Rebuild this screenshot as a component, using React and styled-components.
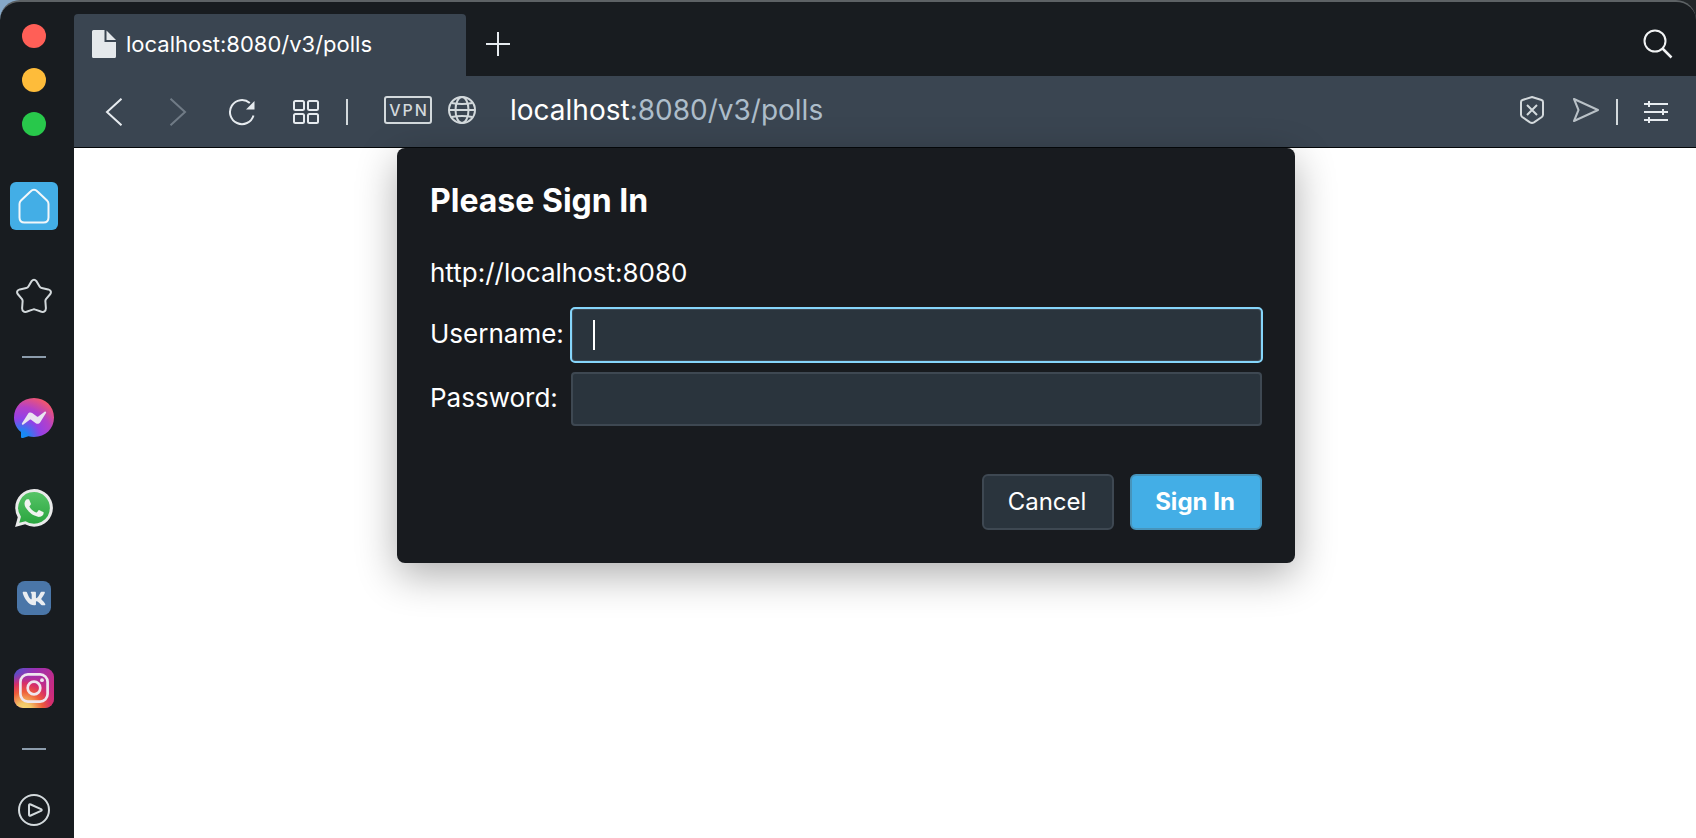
import React from "react";
import styled, { createGlobalStyle } from "styled-components";

const color = {
  frame: "#181c20",
  bar: "#3a4551",
  field: "#2a343d",
  line: "#3e4852",
  accent: "#43aee6",
  focus: "#86d6fb",
  icon: "#e6ebef",
  iconSoft: "#d3d9dc",
};

const GlobalStyle = createGlobalStyle`
  *, *::before, *::after { box-sizing: border-box; }
  body {
    margin: 0;
    background: linear-gradient(90deg, #86a9c9 0 50%, #23272a 50%);
    color: #fff;
    font-family: Inter, "Liberation Sans", sans-serif;
  }
  button, input { font: inherit; color: inherit; }
  h1, p { margin: 0; }
`;

const Browser = styled.div`
  display: flex;
  height: 100vh;
  overflow: hidden;
  background: ${color.frame};
  border-top: 2px solid #5d6265;
  border-radius: 20px 20px 0 0;
`;

const Sidebar = styled.aside`
  flex: none;
  width: 74px;
  display: flex;
  flex-direction: column;
  align-items: center;
  padding-top: 22px;
  overflow: hidden;
`;

const WindowControls = styled.div`
  flex: none;
  display: flex;
  flex-direction: column;
  gap: 20px;
  margin: 0 6px 25px 0;
`;

const PlainButton = styled.button`
  flex: none;
  display: flex;
  align-items: center;
  justify-content: center;
  padding: 0;
  border: 0;
  background: none;
`;

const Light = styled(PlainButton)`
  width: 24px;
  height: 24px;
  border-radius: 50%;
  background: ${(p) => p.$color};
`;

const Apps = styled.nav`
  display: flex;
  flex-direction: column;
  align-items: center;
  margin-right: 6px;
`;

const AppSlot = styled.div`
  flex: none;
  height: 90px;
  display: flex;
  align-items: center;
`;

const AppButton = styled(PlainButton)`
  width: 48px;
  height: 48px;
  border-radius: 6px;
  background: ${(p) => (p.$active ? color.accent : "none")};
`;

const Divider = styled.hr`
  flex: none;
  width: 24px;
  height: 2px;
  margin: 15px 0;
  border: 0;
  background: #8c9cac;
`;

const Main = styled.div`
  flex: 1;
  min-width: 0;
  display: flex;
  flex-direction: column;
`;

const TabStrip = styled.header`
  flex: none;
  height: 74px;
  display: flex;
  align-items: stretch;
  padding-top: 12px;
  padding-right: 22px;
`;

const Tab = styled.div`
  width: 392px;
  display: flex;
  align-items: center;
  gap: 10px;
  padding: 0 18px 2px;
  border-radius: 4px 4px 0 0;
  background: ${color.bar};
  font-size: 22px;
  line-height: 28px;
  white-space: nowrap;
`;

const StripButton = styled(PlainButton)`
  width: 32px;
  height: 60px;
  margin-left: ${(p) => (p.$end ? "auto" : "16px")};
`;

const Toolbar = styled.div`
  flex: none;
  height: 72px;
  display: flex;
  align-items: center;
  padding: 0 24px;
  background: ${color.bar};
  border-bottom: 1px solid #05080a;
`;

const ToolButton = styled(PlainButton)`
  width: 32px;
  height: 32px;
`;

const NavTools = styled.div`
  flex: none;
  display: flex;
  align-items: center;
  gap: 32px;
  margin-right: 24px;
`;

const Separator = styled.span`
  flex: none;
  width: 2px;
  height: 26px;
  background: ${color.iconSoft};
`;

const Location = styled.div`
  flex: 1;
  min-width: 0;
  display: flex;
  align-items: center;
  gap: 14px;
  margin-left: 36px;
  padding-bottom: 3px;
`;

const VpnBadge = styled(PlainButton)`
  width: 48px;
  height: 28px;
  padding-left: 2px;
  border: 2px solid ${color.iconSoft};
  border-radius: 3px;
  color: ${color.iconSoft};
  font-size: 16px;
  font-weight: 500;
  letter-spacing: 2px;
`;

const Address = styled.button`
  flex: 1;
  min-width: 0;
  margin-left: 18px;
  padding: 0;
  border: 0;
  background: none;
  color: #adbdca;
  font-size: 28px;
  line-height: 36px;
  text-align: left;
  white-space: nowrap;
`;

const Host = styled.span`
  color: #fff;
`;

const PageTools = styled.div`
  flex: none;
  display: flex;
  align-items: center;
`;

const ShareTools = styled.div`
  display: flex;
  gap: 22px;
  margin-right: 14px;
  padding-bottom: 3px;
`;

const SetupButton = styled(ToolButton)`
  margin-left: 22px;
`;

const Page = styled.main`
  flex: 1;
  display: flex;
  align-items: flex-start;
  justify-content: center;
  padding-right: 78px;
  background: #fff;
`;

const Dialog = styled.section`
  width: 898px;
  max-width: 100%;
  padding: 33px;
  border-radius: 8px;
  background: #181b1f;
  box-shadow: 0 12px 40px rgba(0, 0, 0, 0.32);
`;

const Title = styled.h1`
  font-size: 32px;
  line-height: 40px;
  font-weight: 700;
`;

const Origin = styled.p`
  margin-top: 36px;
  font-size: 26px;
  line-height: 32px;
`;

const Fields = styled.div`
  display: grid;
  grid-template-columns: 131px 1fr;
  align-items: center;
  gap: 10px;
  margin-top: 19px;
  font-size: 26px;
  line-height: 32px;
`;

const FieldLabel = styled.label`
  padding-bottom: 2px;
  white-space: nowrap;
`;

const FieldBox = styled.div`
  position: relative;
  display: flex;
`;

const Field = styled.input`
  width: 100%;
  height: 54px;
  padding: 0 20px;
  border: 2px solid ${color.line};
  border-radius: 4px;
  outline: ${(p) => (p.$active ? `2px solid ${color.focus}` : "none")};
  outline-offset: -1px;
  background: ${color.field};
`;

const Caret = styled.span`
  position: absolute;
  top: 12px;
  left: 22px;
  width: 2px;
  height: 30px;
  background: #fff;
`;

const Actions = styled.div`
  display: flex;
  justify-content: flex-end;
  gap: 16px;
  margin-top: 48px;
`;

const Action = styled.button`
  width: 132px;
  height: 56px;
  padding: 0 2px 2px 0;
  border: 2px solid ${(p) => (p.$primary ? "#4794bb" : color.line)};
  border-radius: 6px;
  background: ${(p) => (p.$primary ? color.accent : color.field)};
  font-size: 24px;
  font-weight: ${(p) => (p.$primary ? 700 : 400)};
`;

function Icon({ w, h, children, stroke = color.icon, width = 2 }) {
  return (
    <svg
      width={w}
      height={h}
      viewBox={`0 0 ${w} ${h}`}
      fill="none"
      stroke={stroke}
      strokeWidth={width}
      aria-hidden="true"
    >
      {children}
    </svg>
  );
}

const FileIcon = () => (
  <Icon w={24} h={28} stroke="none">
    <path d="M1.5 0H12.500V12H24V26.500Q24 28 22.500 28H1.500Q0 28 0 26.500V1.500Q0 0 1.500 0Z" fill="#e4e8eb" />
    <path d="M14.500 0.500L24 10H14.500Z" fill="#e4e8eb" />
  </Icon>
);

const PlusIcon = () => (
  <Icon w={24} h={24}>
    <path d="M12 0V24M0 12H24" />
  </Icon>
);

const SearchIcon = () => (
  <Icon w={30} h={30} stroke="#f1f3f4">
    <circle cx="12" cy="12" r="10.500" />
    <path d="M19.500 19.500L28.500 28.500" strokeWidth="2.500" />
  </Icon>
);

const BackIcon = () => (
  <Icon w={18} h={28}>
    <path d="M16.500 0.700L2 14L16.500 27.300" />
  </Icon>
);

const ForwardIcon = () => (
  <Icon w={18} h={28} stroke="#707b86">
    <path d="M1.500 0.700L16 14L1.500 27.300" />
  </Icon>
);

const ReloadIcon = () => (
  <Icon w={28} h={28}>
    <path d="M25.500 17.500A12 12 0 1 1 21.800 5" />
    <path d="M26.500 3V11.500H18Z" fill={color.icon} stroke="none" />
  </Icon>
);

const GridIcon = () => (
  <Icon w={26} h={24}>
    <rect x="1" y="1" width="10" height="9" rx="1.500" />
    <rect x="15" y="1" width="10" height="9" rx="1.500" />
    <rect x="1" y="14" width="10" height="9" rx="1.500" />
    <rect x="15" y="14" width="10" height="9" rx="1.500" />
  </Icon>
);

const GlobeIcon = () => (
  <Icon w={28} h={28} stroke={color.iconSoft}>
    <circle cx="14" cy="14" r="13" />
    <ellipse cx="14" cy="14" rx="6.500" ry="13" />
    <path d="M1 14H27M3.500 7Q14 9 24.500 7M3.500 21Q14 19 24.500 21" />
  </Icon>
);

const ShieldIcon = () => (
  <Icon w={24} h={28} stroke={color.iconSoft}>
    <path d="M12 1L21.500 4Q23 4.500 23 6V18.500Q23 20 21.800 21L14 26.300Q12 27.500 10 26.300L2.200 21Q1 20 1 18.500V6Q1 4.500 2.500 4Z" />
    <path d="M7 9L17 19M17 9L7 19" />
  </Icon>
);

const SendIcon = () => (
  <Icon w={28} h={26} stroke="#b9c1c7">
    <path d="M2 2L26 13L2 24L6.500 13Z" strokeLinejoin="round" />
  </Icon>
);

const SlidersIcon = () => (
  <Icon w={24} h={22}>
    <path d="M0 3H24M0 11H24M0 19H24M5 0V6M19 8V14M5 16V22" />
  </Icon>
);

const HomeIcon = () => (
  <Icon w={32} h={36} stroke="#f2f7fa">
    <path d="M12.500 3.500Q16 0 19.500 3.500L29 12.500Q30.500 14 30.500 16V29.500Q30.500 34.500 25.500 34.500H6.500Q1.500 34.500 1.500 29.500V16Q1.500 14 3 12.500Z" />
  </Icon>
);

const StarIcon = () => (
  <Icon w={36} h={36} stroke={color.iconSoft}>
    <path
      strokeLinejoin="round"
      d="M15.500 3.200Q18 0.500 20.500 3.200L23.600 8.600Q24.300 9.800 25.700 10.100L32.200 11.400Q36.200 12.800 34.300 16L30 21.100Q29.200 22.200 29.400 23.500L29.900 30.200Q29.600 34.600 25.500 33.800L19.400 31.600Q18 31 16.600 31.600L10.500 33.800Q6.400 34.600 6.100 30.200L6.600 23.500Q6.800 22.200 6 21.100L1.700 16Q-0.200 12.800 3.800 11.400L10.300 10.100Q11.700 9.800 12.400 8.600Z"
    />
  </Icon>
);

const MessengerIcon = () => (
  <Icon w={40} h={40} stroke="none">
    <defs>
      <radialGradient id="messenger" cx="0.18" cy="1" r="1.100">
        <stop offset="0" stopColor="#1290f5" />
        <stop offset="0.150" stopColor="#1b86f2" />
        <stop offset="0.450" stopColor="#9440e6" />
        <stop offset="0.700" stopColor="#b340c9" />
        <stop offset="1" stopColor="#f4576b" />
      </radialGradient>
    </defs>
    <path
      fill="url(#messenger)"
      d="M20 0C31.500 0 40 8.300 40 19.500S31.500 39 20 39C18 39 16.200 38.700 14.400 38.200L9 40Q7 40.600 7 38.500V34C2.800 30.600 0 25.600 0 19.500C0 8.300 8.500 0 20 0Z"
    />
    <path
      fill="#e9e5f0"
      d="M8 25.200L13.900 15.900C14.800 14.400 16.800 14 18.200 15.100L22.900 18.600C23.300 18.900 23.900 18.900 24.300 18.600L30.600 13.800C31.500 13.100 32.600 14.200 32 15.100L26.100 24.400C25.200 25.900 23.200 26.300 21.800 25.200L17.100 21.700C16.700 21.400 16.100 21.400 15.700 21.700L9.400 26.500C8.500 27.200 7.400 26.200 8 25.200Z"
    />
  </Icon>
);

const WhatsAppIcon = () => (
  <svg width="38" height="38" viewBox="0 0 24 24" aria-hidden="true">
    <defs>
      <linearGradient id="whatsapp" x1="0" y1="0" x2="0" y2="1">
        <stop offset="0" stopColor="#56c467" />
        <stop offset="1" stopColor="#2aa53f" />
      </linearGradient>
    </defs>
    <path
      fill="#e9eaea"
      d="M0.057 24L1.744 17.837A11.900 11.900 0 0 1 0.157 11.892C0.160 5.335 5.495 0 12.050 0A11.900 11.900 0 0 1 23.945 11.893C23.943 18.450 18.607 23.785 12.050 23.785A11.900 11.900 0 0 1 6.362 22.335Z"
    />
    <path
      fill="url(#whatsapp)"
      d="M2.700 21.300L3.750 17.500A9.950 9.950 0 0 1 12.050 1.950A9.950 9.950 0 0 1 22 11.900A9.950 9.950 0 0 1 6.650 20.300Z"
    />
    <path
      fill="#f0f3f0"
      d="M17.472 14.382c-.297-.149-1.758-.867-2.03-.967-.273-.099-.471-.148-.67.15-.197.297-.767.966-.94 1.164-.173.199-.347.223-.644.075-.297-.15-1.255-.463-2.39-1.475-.883-.788-1.48-1.761-1.653-2.059-.173-.297-.018-.458.13-.606.134-.133.298-.347.446-.52.149-.174.198-.298.298-.497.099-.198.05-.371-.025-.52-.075-.149-.669-1.612-.916-2.207-.242-.579-.487-.5-.669-.51-.173-.008-.371-.01-.57-.01-.198 0-.52.074-.792.372-.272.297-1.04 1.016-1.04 2.479 0 1.462 1.065 2.875 1.213 3.074.149.198 2.096 3.2 5.077 4.487.709.306 1.262.489 1.694.625.712.227 1.36.195 1.871.118.571-.085 1.758-.719 2.006-1.413.248-.694.248-1.289.173-1.413-.074-.124-.272-.198-.57-.347"
    />
  </svg>
);

const VkIcon = () => (
  <svg width="34" height="34" viewBox="0 0 24 24" aria-hidden="true">
    <rect width="24" height="24" rx="5.500" fill="#4a76a8" />
    <path
      fill="#e9edf1"
      d="M19.376 17.123h-1.744c-.66 0-.864-.525-2.05-1.727-1.033-1-1.49-1.135-1.744-1.135-.356 0-.458.102-.458.593v1.575c0 .424-.135.678-1.253.678-1.846 0-3.896-1.118-5.335-3.202C4.624 10.857 4.03 8.57 4.03 8.096c0-.254.102-.491.593-.491h1.744c.44 0 .61.203.78.677.863 2.49 2.303 4.675 2.896 4.675.22 0 .322-.102.322-.66V9.721c-.068-1.186-.695-1.287-.695-1.71 0-.204.17-.407.44-.407h2.744c.373 0 .508.203.508.643v3.473c0 .372.17.508.271.508.22 0 .407-.136.813-.542 1.254-1.406 2.151-3.574 2.151-3.574.119-.254.322-.491.763-.491h1.744c.525 0 .644.27.525.643-.22 1.017-2.354 4.031-2.354 4.031-.186.305-.254.44 0 .78.186.254.796.779 1.203 1.253.745.847 1.32 1.558 1.473 2.049.17.49-.085.744-.576.744z"
    />
  </svg>
);

const InstagramIcon = () => (
  <Icon w={40} h={40} stroke="none">
    <defs>
      <linearGradient id="igBase" x1="0" y1="0" x2="1" y2="0.600">
        <stop offset="0" stopColor="#4c55c9" />
        <stop offset="0.400" stopColor="#9a30b4" />
        <stop offset="1" stopColor="#cf2a78" />
      </linearGradient>
      <radialGradient id="igGlow" cx="0.250" cy="1.070" r="0.950">
        <stop offset="0" stopColor="#f7dc7a" />
        <stop offset="0.200" stopColor="#f3c868" />
        <stop offset="0.500" stopColor="#ee5d3a" />
        <stop offset="0.720" stopColor="#d83066" />
        <stop offset="1" stopColor="#b92b9d" stopOpacity="0" />
      </radialGradient>
    </defs>
    <rect width="40" height="40" rx="9" fill="url(#igBase)" />
    <rect width="40" height="40" rx="9" fill="url(#igGlow)" />
    <g stroke="#efe6ee" strokeWidth="2.700">
      <rect x="6.400" y="6.400" width="27.200" height="27.200" rx="7.500" />
      <circle cx="20" cy="20" r="6.300" />
    </g>
    <circle cx="28" cy="12.200" r="1.900" fill="#efe6ee" />
  </Icon>
);

const PlayIcon = () => (
  <Icon w={32} h={32} stroke={color.iconSoft}>
    <circle cx="16" cy="16" r="15" />
    <path
      strokeLinejoin="round"
      d="M11 11.500Q11 9.700 12.700 10.500L23 15.200Q24.500 16 23 16.800L12.700 21.500Q11 22.300 11 20.500Z"
    />
  </Icon>
);

function SideApp({ label, active, children }) {
  return (
    <AppSlot>
      <AppButton type="button" aria-label={label} $active={active}>
        {children}
      </AppButton>
    </AppSlot>
  );
}

export default function App() {
  return (
    <Browser>
      <GlobalStyle />
      <Sidebar>
        <WindowControls>
          <Light type="button" aria-label="Close" $color="#ff5f57" />
          <Light type="button" aria-label="Minimize" $color="#febc3a" />
          <Light type="button" aria-label="Zoom" $color="#28c84b" />
        </WindowControls>
        <Apps>
          <SideApp label="Home" active><HomeIcon /></SideApp>
          <SideApp label="Bookmarks"><StarIcon /></SideApp>
          <Divider />
          <SideApp label="Messenger"><MessengerIcon /></SideApp>
          <SideApp label="WhatsApp"><WhatsAppIcon /></SideApp>
          <SideApp label="VK"><VkIcon /></SideApp>
          <SideApp label="Instagram"><InstagramIcon /></SideApp>
          <Divider />
          <SideApp label="Player"><PlayIcon /></SideApp>
        </Apps>
      </Sidebar>
      <Main>
        <TabStrip>
          <Tab>
            <FileIcon />
            <span>localhost:8080/v3/polls</span>
          </Tab>
          <StripButton type="button" aria-label="New tab"><PlusIcon /></StripButton>
          <StripButton type="button" aria-label="Search tabs" $end><SearchIcon /></StripButton>
        </TabStrip>
        <Toolbar>
          <NavTools>
            <ToolButton type="button" aria-label="Back"><BackIcon /></ToolButton>
            <ToolButton type="button" aria-label="Forward"><ForwardIcon /></ToolButton>
            <ToolButton type="button" aria-label="Reload"><ReloadIcon /></ToolButton>
            <ToolButton type="button" aria-label="Speed dial"><GridIcon /></ToolButton>
          </NavTools>
          <Separator />
          <Location>
            <VpnBadge type="button">VPN</VpnBadge>
            <ToolButton type="button" aria-label="Site information"><GlobeIcon /></ToolButton>
            <Address type="button">
              <Host>localhost</Host>:8080/v3/polls
            </Address>
          </Location>
          <PageTools>
            <ShareTools>
              <ToolButton type="button" aria-label="Ad blocker"><ShieldIcon /></ToolButton>
              <ToolButton type="button" aria-label="Send"><SendIcon /></ToolButton>
            </ShareTools>
            <Separator />
            <SetupButton type="button" aria-label="Easy setup"><SlidersIcon /></SetupButton>
          </PageTools>
        </Toolbar>
        <Page>
          <Dialog role="dialog" aria-labelledby="sign-in-title">
            <Title id="sign-in-title">Please Sign In</Title>
            <Origin>http://localhost:8080</Origin>
            <form onSubmit={(e) => e.preventDefault()}>
              <Fields>
                <FieldLabel htmlFor="username">Username:</FieldLabel>
                <FieldBox>
                  <Field id="username" type="text" autoComplete="off" $active />
                  <Caret />
                </FieldBox>
                <FieldLabel htmlFor="password">Password:</FieldLabel>
                <FieldBox>
                  <Field id="password" type="password" autoComplete="off" />
                </FieldBox>
              </Fields>
              <Actions>
                <Action type="button">Cancel</Action>
                <Action type="submit" $primary>Sign In</Action>
              </Actions>
            </form>
          </Dialog>
        </Page>
      </Main>
    </Browser>
  );
}
